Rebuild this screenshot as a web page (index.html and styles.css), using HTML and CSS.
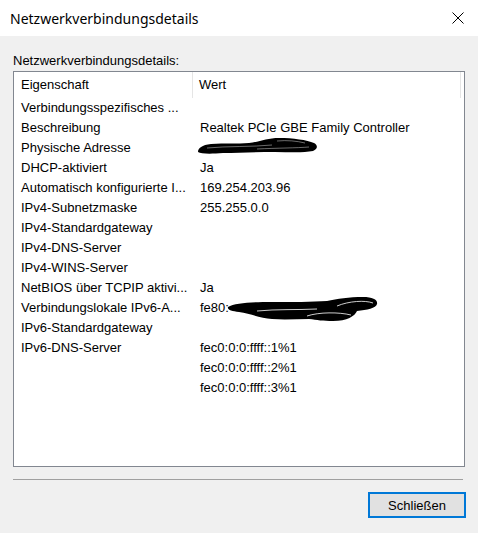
FILE: index.html
```html
<!DOCTYPE html>
<html lang="de">
<head>
<meta charset="utf-8">
<title>Netzwerkverbindungsdetails</title>
<link rel="stylesheet" href="styles.css">
</head>
<body>
<div class="window">
  <div class="titlebar">
    <span class="title">Netzwerkverbindungsdetails</span>
    <svg class="close" width="12" height="12" viewBox="0 0 12 12"><path d="M0.5 0.5 L11.5 11.5 M11.5 0.5 L0.5 11.5" stroke="#000" stroke-width="1" fill="none"/></svg>
  </div>
  <div class="content">
    <div class="label">Netzwerkverbindungsdetails:</div>
    <div class="listview">
      <div class="header">
        <div class="hcell h1">Eigenschaft</div>
        <div class="hcell h2">Wert</div>
        <div class="hcell h3"></div>
      </div>
      <div class="row"><div class="c1">Verbindungsspezifisches ...</div><div class="c2"></div></div>
      <div class="row"><div class="c1">Beschreibung</div><div class="c2">Realtek PCIe GBE Family Controller</div></div>
      <div class="row"><div class="c1">Physische Adresse</div><div class="c2"><svg class="scribble s1" width="122" height="18" viewBox="0 0 122 18"><path d="M1 15 C1 11 5 8 14 7 C28 6 40 7 52 6 C62 5 70 1 82 1 C96 1 110 3 117 6 C121 8 121 12 116 14 C106 16 92 15 78 15 C60 15 42 16 26 16 C14 17 4 17 1 15 Z" fill="#000"/><path d="M10 11 C30 9 55 10 75 8 M60 12 C80 11 100 11 112 10 M80 4 C90 3 100 4 108 6" stroke="#fff" stroke-width="0.7" fill="none" opacity="0.6"/></svg></div></div>
      <div class="row"><div class="c1">DHCP-aktiviert</div><div class="c2">Ja</div></div>
      <div class="row"><div class="c1">Automatisch konfigurierte I...</div><div class="c2">169.254.203.96</div></div>
      <div class="row"><div class="c1">IPv4-Subnetzmaske</div><div class="c2">255.255.0.0</div></div>
      <div class="row"><div class="c1">IPv4-Standardgateway</div><div class="c2"></div></div>
      <div class="row"><div class="c1">IPv4-DNS-Server</div><div class="c2"></div></div>
      <div class="row"><div class="c1">IPv4-WINS-Server</div><div class="c2"></div></div>
      <div class="row"><div class="c1">NetBIOS über TCPIP aktivi...</div><div class="c2">Ja</div></div>
      <div class="row"><div class="c1">Verbindungslokale IPv6-A...</div><div class="c2 withscribble">fe80:<svg class="scribble s2" width="152" height="26" viewBox="0 0 152 26"><path d="M1 10 C8 6 25 5 45 5 C65 5 85 5 100 4 C110 2 122 0 136 0 C146 0 151 3 150 7 C149 11 140 13 130 14 C128 19 120 24 106 24 C96 24 90 23 82 22 C70 22 58 23 45 22 C34 21 24 17 12 15 C5 14 0 13 1 10 Z" fill="#000"/><path d="M110 9 C122 4 138 3 146 6 M80 19 C92 15 112 15 124 18 M30 14 C50 12 70 13 90 12" stroke="#fff" stroke-width="1" fill="none" opacity="0.8"/></svg></div></div>
      <div class="row"><div class="c1">IPv6-Standardgateway</div><div class="c2"></div></div>
      <div class="row"><div class="c1">IPv6-DNS-Server</div><div class="c2">fec0:0:0:ffff::1%1</div></div>
      <div class="row"><div class="c1"></div><div class="c2">fec0:0:0:ffff::2%1</div></div>
      <div class="row"><div class="c1"></div><div class="c2">fec0:0:0:ffff::3%1</div></div>
    </div>
    <div class="sep"></div>
    <div class="footer">
      <button class="btn">Schließen</button>
    </div>
  </div>
</div>
</body>
</html>
```

FILE: styles.css
```css
html, body {
  margin: 0;
  padding: 0;
}
body {
  width: 478px;
  height: 533px;
  overflow: hidden;
  font-family: "Liberation Sans", Arial, sans-serif;
  font-size: 13px;
  color: #000;
}
.window {
  width: 478px;
  height: 533px;
  display: flex;
  flex-direction: column;
  background: #f0f0f0;
}
.titlebar {
  position: relative;
  height: 36px;
  background: #fff;
  display: flex;
  align-items: center;
  padding-left: 10px;
}
.title {
  font-family: "Noto Sans", "Open Sans", sans-serif;
  font-size: 14px;
  color: #000;
}
.close {
  position: absolute;
  left: 452px;
  top: 12px;
}
.content {
  flex: 1;
  display: flex;
  flex-direction: column;
  padding: 14px 12px 0 13px;
}
.label {
  height: 20px;
  line-height: 21px;
  margin-bottom: 1px;
}
.listview {
  width: 450px;
  height: 394px;
  border: 1px solid #828790;
  background: #fff;
}
.header {
  display: grid;
  grid-template-columns: 179px 268px 3px;
  height: 25px;
}
.hcell {
  line-height: 26px;
}
.h1 {
  padding-left: 7px;
  border-right: 1px solid #e5e5e5;
}
.h2 {
  padding-left: 6px;
  border-right: 1px solid #e5e5e5;
}
.row {
  display: grid;
  grid-template-columns: 180px 1fr;
  height: 20px;
  line-height: 21px;
  white-space: nowrap;
}
.c1 {
  padding-left: 7px;
}
.c2 {
  padding-left: 6px;
  position: relative;
}
.scribble {
  position: absolute;
}
.s1 {
  left: 3px;
  top: 0px;
}
.s2 {
  left: 33px;
  top: 0px;
}
.sep {
  width: 450px;
  height: 1px;
  background: #a0a0a0;
  margin-top: 12px;
}
.footer {
  display: flex;
  justify-content: flex-end;
  margin-top: 12px;
}
.btn {
  width: 98px;
  height: 26px;
  border: 2px solid #0078d7;
  background: #e1e1e1;
  font-family: "Liberation Sans", Arial, sans-serif;
  font-size: 13px;
  color: #000;
  padding: 0;
  margin: 0;
}
```
